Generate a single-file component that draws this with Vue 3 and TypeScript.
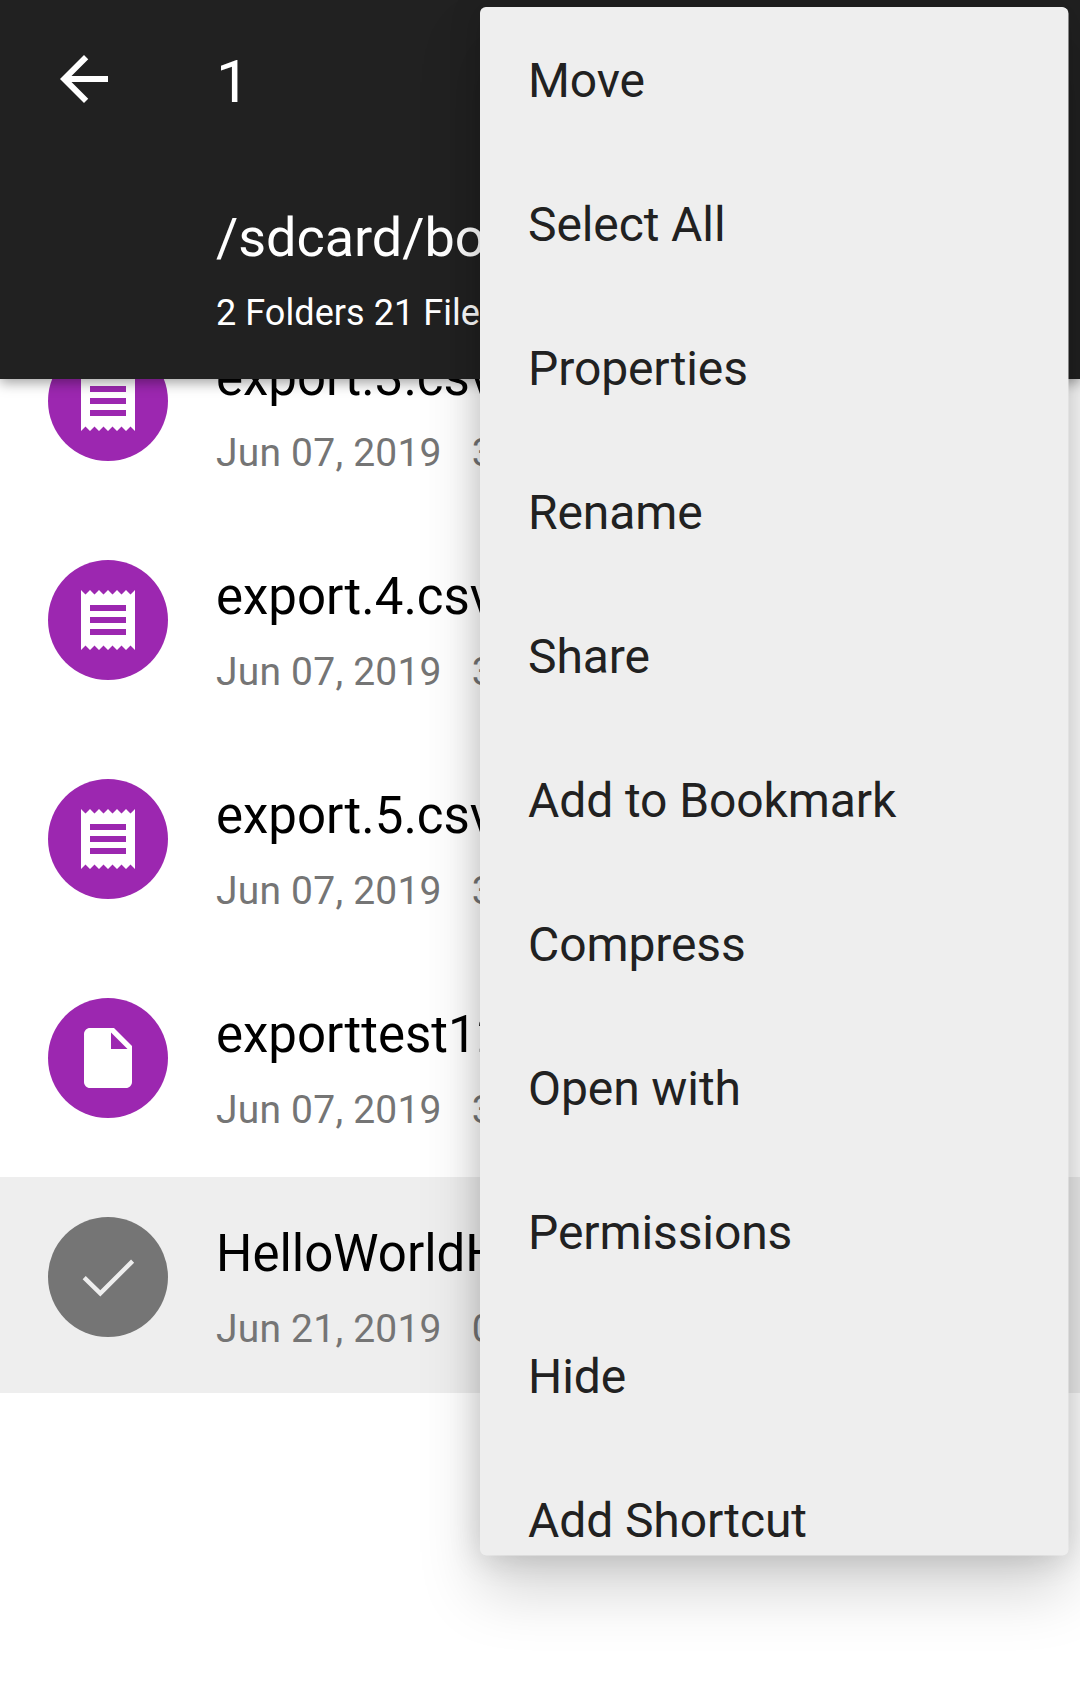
<script setup lang="ts">
type IconKind = 'receipt' | 'file' | 'check'

interface FileEntry {
  name: string
  date: string
  size: string
  icon: IconKind
}

const files: FileEntry[] = [
  { name: 'export.3.csv', date: 'Jun 07, 2019', size: '3', icon: 'receipt' },
  { name: 'export.4.csv', date: 'Jun 07, 2019', size: '3', icon: 'receipt' },
  { name: 'export.5.csv', date: 'Jun 07, 2019', size: '3', icon: 'receipt' },
  { name: 'exporttest12', date: 'Jun 07, 2019', size: '3', icon: 'file' },
  { name: 'HelloWorldH', date: 'Jun 21, 2019', size: '0', icon: 'check' },
]

const actions: string[] = [
  'Move',
  'Select All',
  'Properties',
  'Rename',
  'Share',
  'Add to Bookmark',
  'Compress',
  'Open with',
  'Permissions',
  'Hide',
  'Add Shortcut',
]
</script>

<template>
  <div class="screen">
    <header class="bar">
      <div class="toolbar">
        <svg class="back" viewBox="0 0 24 24">
          <path d="M20 11H7.83l5.59-5.59L12 4l-8 8 8 8 1.41-1.41L7.83 13H20v-2z" />
        </svg>
        <span class="count">1</span>
      </div>
      <div class="path">/sdcard/bo</div>
      <div class="summary">2 Folders 21 File</div>
    </header>

    <main class="list">
      <div
        v-for="file in files"
        :key="file.name"
        class="row"
        :class="{ selected: file.icon === 'check' }"
      >
        <div class="avatar">
          <svg v-if="file.icon === 'receipt'" class="glyph" viewBox="0 0 24 24">
            <path
              d="M18 17H6v-2h12v2zm0-4H6v-2h12v2zm0-4H6V7h12v2zM3 22l1.5-1.5L6 22l1.5-1.5L9 22l1.5-1.5L12 22l1.5-1.5L15 22l1.5-1.5L18 22l1.5-1.5L21 22V2l-1.5 1.5L18 2l-1.5 1.5L15 2l-1.5 1.5L12 2l-1.5 1.5L9 2 7.5 3.5 6 2 4.5 3.5 3 2v20z"
            />
          </svg>
          <svg v-else-if="file.icon === 'file'" class="glyph" viewBox="0 0 24 24">
            <path
              d="M6 2c-1.1 0-1.99.9-1.99 2L4 20c0 1.1.89 2 1.99 2H18c1.1 0 2-.9 2-2V8l-6-6H6zm7 7V3.5L18.5 9H13z"
            />
          </svg>
          <svg v-else class="tick" viewBox="0 0 120 120">
            <path d="M36.2 60.6 52.3 76.4 84.6 44.1" />
          </svg>
        </div>
        <div class="info">
          <div class="name">{{ file.name }}</div>
          <div class="meta">
            <span>{{ file.date }}</span>
            <span>{{ file.size }}</span>
          </div>
        </div>
      </div>
    </main>

    <nav class="menu">
      <div v-for="action in actions" :key="action" class="item">{{ action }}</div>
    </nav>
  </div>
</template>

<style>
body {
  margin: 0;
  background: #fff;
}
</style>

<style scoped>
.screen {
  position: relative;
  width: 1080px;
  height: 1699px;
  overflow: hidden;
  background: #fff;
  font-family: Roboto, 'Liberation Sans', sans-serif;
  white-space: nowrap;
}

.bar {
  position: relative;
  z-index: 1;
  box-sizing: border-box;
  height: 379px;
  background: #212121;
  color: #fff;
  box-shadow: 0 4px 12px rgba(0, 0, 0, 0.36);
}

.toolbar {
  display: flex;
  align-items: center;
  height: 158px;
  padding-left: 48px;
}

.back {
  width: 72px;
  height: 72px;
  fill: #fff;
}

.count {
  margin-left: 96px;
  font-size: 60px;
  line-height: 70px;
  padding-top: 5px;
}

.path {
  padding: 48px 0 0 216px;
  font-size: 54px;
  line-height: 64px;
  letter-spacing: -0.05px;
}

.summary {
  padding: 22px 0 0 216px;
  font-size: 36px;
  line-height: 42px;
  letter-spacing: 0.06px;
}

.list {
  display: flex;
  flex-direction: column;
  gap: 3px;
  margin-top: -78px;
}

.row {
  display: flex;
  align-items: flex-start;
  box-sizing: border-box;
  height: 216px;
  padding: 40px 0 0 48px;
}

.selected {
  background: #eee;
}

.avatar {
  display: flex;
  align-items: center;
  justify-content: center;
  width: 120px;
  height: 120px;
  border-radius: 50%;
  background: #9c27b0;
}

.selected .avatar {
  background: #757575;
}

.glyph {
  width: 72px;
  height: 72px;
  fill: #fff;
}

.tick {
  width: 120px;
  height: 120px;
  fill: none;
  stroke: #eee;
  stroke-width: 4.4;
}

.info {
  margin-left: 48px;
}

.name {
  padding-top: 7px;
  font-size: 51px;
  line-height: 60px;
  color: #000;
}

.meta {
  display: flex;
  gap: 30px;
  padding-top: 22px;
  font-size: 39px;
  line-height: 46px;
  letter-spacing: 0.22px;
  color: #757575;
}

.menu {
  position: absolute;
  z-index: 2;
  top: 7px;
  left: 480px;
  box-sizing: border-box;
  width: 588px;
  height: 1548px;
  padding: 2px 0 0 48px;
  overflow: hidden;
  border-radius: 6px;
  background: #eee;
  box-shadow:
    0.5px 0.5px 0 #eee,
    0 36px 62px rgba(0, 0, 0, 0.17),
    0 2px 32px rgba(0, 0, 0, 0.16);
}

.item {
  height: 144px;
  font-size: 48px;
  line-height: 144px;
  letter-spacing: -0.1px;
  color: #212121;
}
</style>
